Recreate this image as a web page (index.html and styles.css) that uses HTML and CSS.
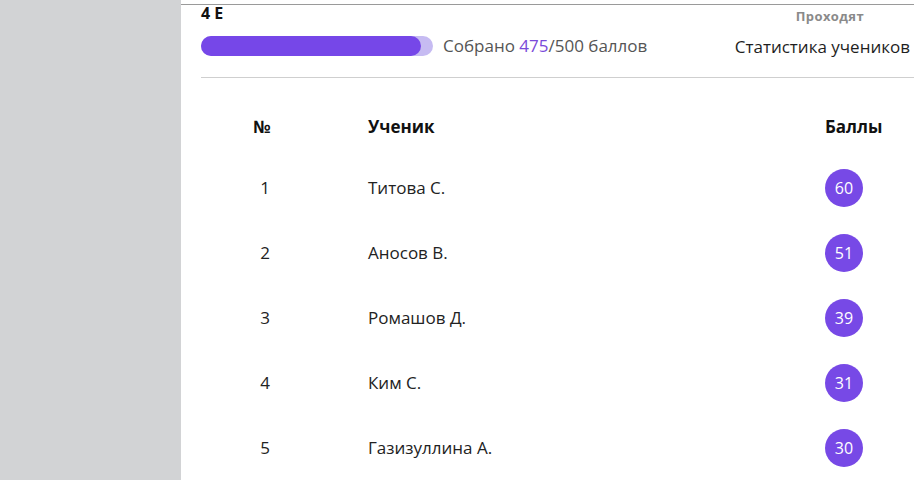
FILE: index.html
```html
<!DOCTYPE html>
<html lang="ru">
<head>
    <meta charset="UTF-8">
    <meta name="viewport" content="width=device-width, initial-scale=1.0">
    <title>4 E</title>
    <link rel="stylesheet" href="styles.css">
</head>
<body>
    <div class="layout">
        <aside class="sidebar"></aside>
        <main class="main">
            <div class="topline"></div>
            <div class="head">
                <div class="head-left">
                    <h1 class="title">4 E</h1>
                    <div class="progress-row">
                        <div class="progress">
                            <div class="progress-fill" style="width: 95%"></div>
                        </div>
                        <span class="progress-text">Собрано <span class="accent">475</span>/500 баллов</span>
                    </div>
                </div>
                <div class="head-right">
                    <div class="status">Проходят</div>
                    <div class="stats-link">Статистика учеников</div>
                </div>
            </div>
            <div class="divider"></div>
            <div class="table">
                <div class="row row-head">
                    <div class="cell num">№</div>
                    <div class="cell name">Ученик</div>
                    <div class="cell score">Баллы</div>
                </div>
                <div class="row">
                    <div class="cell num">1</div>
                    <div class="cell name">Титова С.</div>
                    <div class="cell score"><span class="badge">60</span></div>
                </div>
                <div class="row">
                    <div class="cell num">2</div>
                    <div class="cell name">Аносов В.</div>
                    <div class="cell score"><span class="badge">51</span></div>
                </div>
                <div class="row">
                    <div class="cell num">3</div>
                    <div class="cell name">Ромашов Д.</div>
                    <div class="cell score"><span class="badge">39</span></div>
                </div>
                <div class="row">
                    <div class="cell num">4</div>
                    <div class="cell name">Ким С.</div>
                    <div class="cell score"><span class="badge">31</span></div>
                </div>
                <div class="row">
                    <div class="cell num">5</div>
                    <div class="cell name">Газизуллина А.</div>
                    <div class="cell score"><span class="badge">30</span></div>
                </div>
            </div>
        </main>
    </div>
</body>
</html>
```

FILE: styles.css
```css
body {
    margin: 0;
    background-color: #ffffff;
    color: #222222;
    font-family: "Open Sans", "Liberation Sans", sans-serif;
    font-size: 17px;
}
.layout {
    display: flex;
    min-height: 480px;
}
.sidebar {
    width: 181px;
    flex-shrink: 0;
    background-color: #d2d3d5;
}
.main {
    flex: 1;
    overflow: hidden;
}
.topline {
    margin-top: 4px;
    height: 1px;
    background-color: #9a9a9a;
}
.head {
    display: flex;
    justify-content: space-between;
    padding-left: 20px;
    padding-right: 4px;
}
.title {
    margin: 0;
    font-size: 16px;
    font-weight: 700;
    line-height: 16px;
    color: #111111;
}
.progress-row {
    display: flex;
    align-items: center;
    margin-top: 15px;
}
.progress {
    width: 232px;
    height: 20px;
    border-radius: 10px;
    background-color: #c6bbf2;
}
.progress-fill {
    height: 100%;
    border-radius: 10px;
    background-color: #7647e8;
}
.progress-text {
    margin-left: 10px;
    color: #555555;
    line-height: 20px;
}
.accent {
    color: #7a4ad9;
}
.head-right {
    display: flex;
    flex-direction: column;
}
.status {
    padding-left: 61px;
    margin-top: 3px;
    font-size: 13px;
    font-weight: 700;
    letter-spacing: 0.4px;
    line-height: 16px;
    color: #8a8a8a;
}
.stats-link {
    margin-top: 13px;
    line-height: 20px;
    color: #1e1e1e;
}
.divider {
    margin: 20px 0 0 20px;
    height: 1px;
    background-color: #cfcfcf;
}
.table {
    margin-left: 20px;
    margin-right: 29px;
    padding-top: 20px;
}
.row {
    display: grid;
    grid-template-columns: 128px 1fr 60px;
    align-items: center;
    height: 65px;
}
.row-head {
    height: 57px;
    font-weight: 700;
    color: #111111;
}
.num {
    text-align: center;
}
.row-head .num {
    padding-right: 6px;
}
.name {
    padding-left: 39px;
}
.score {
    display: flex;
}
.badge {
    display: flex;
    align-items: center;
    justify-content: center;
    width: 38px;
    height: 38px;
    border-radius: 50%;
    background-color: #7749e6;
    color: #ffffff;
    font-size: 16px;
}
```
